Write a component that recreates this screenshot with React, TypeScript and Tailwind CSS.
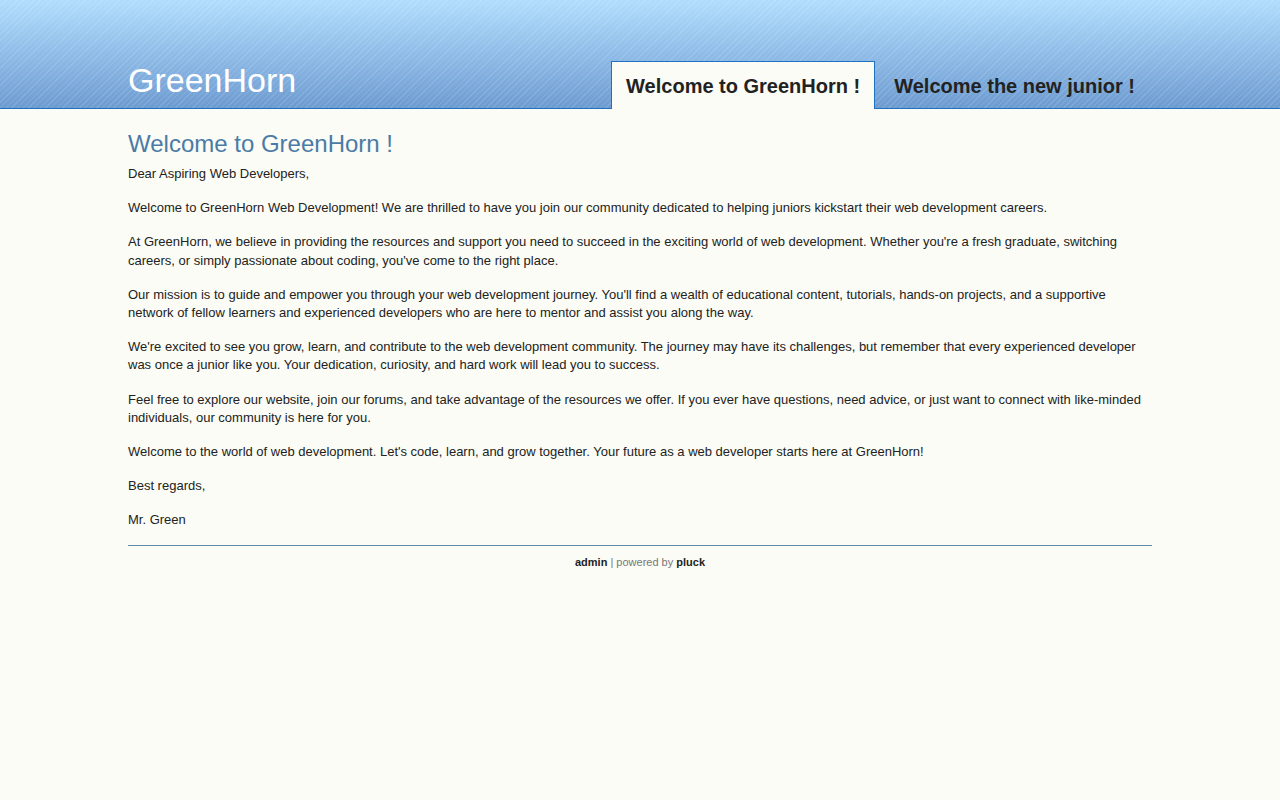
import React from 'react';

const paragraphs = [
  'Dear Aspiring Web Developers,',
  'Welcome to GreenHorn Web Development! We are thrilled to have you join our community dedicated to helping juniors kickstart their web development careers.',
  "At GreenHorn, we believe in providing the resources and support you need to succeed in the exciting world of web development. Whether you're a fresh graduate, switching careers, or simply passionate about coding, you've come to the right place.",
  "Our mission is to guide and empower you through your web development journey. You'll find a wealth of educational content, tutorials, hands-on projects, and a supportive network of fellow learners and experienced developers who are here to mentor and assist you along the way.",
  "We're excited to see you grow, learn, and contribute to the web development community. The journey may have its challenges, but remember that every experienced developer was once a junior like you. Your dedication, curiosity, and hard work will lead you to success.",
  'Feel free to explore our website, join our forums, and take advantage of the resources we offer. If you ever have questions, need advice, or just want to connect with like-minded individuals, our community is here for you.',
  "Welcome to the world of web development. Let's code, learn, and grow together. Your future as a web developer starts here at GreenHorn!",
  'Best regards,',
  'Mr. Green',
];

export default function App() {
  return (
    <div className="min-h-[800px] bg-[#fbfcf5] font-['Liberation_Sans',Arial,sans-serif] text-[#222]">
      {/* Header */}
      <div className="h-[109px] border-b border-[#1f72bf] bg-[image:repeating-linear-gradient(135deg,rgba(255,255,255,0.12)_0px,rgba(255,255,255,0.12)_1px,transparent_1px,transparent_4px),linear-gradient(to_bottom,#b1ddfd,#6d9bd1)]">
        <div className="mx-auto flex h-full w-[1024px] items-end">
          <div className="mb-[8px] text-[34px] leading-[40px] text-white">GreenHorn</div>
          <div className="ml-auto mr-[2px] flex gap-[4px] -mb-px">
            <div className="flex h-[48px] items-center border border-b-0 border-[#1f72bf] bg-[#fbfcf5] px-[14px] pt-[1px] text-[20px] font-bold text-[#222]">
              Welcome to GreenHorn !
            </div>
            <div className="flex h-[48px] items-center border border-transparent px-[14px] pt-[1px] text-[20px] font-bold text-[#222]">
              Welcome the new junior !
            </div>
          </div>
        </div>
      </div>

      {/* Content */}
      <div className="mx-auto w-[1024px] pt-[19px]">
        <h1 className="mb-[5px] text-[24px] leading-[32px] text-[#4a7ba6]">Welcome to GreenHorn !</h1>
        {paragraphs.map((p, i) => (
          <p key={i} className="mb-[16px] text-[13px] leading-[1.4]">
            {p}
          </p>
        ))}
        <div className="border-t border-[#5f8aaa] pt-[8px] text-center text-[11px] text-[#777]">
          <span className="font-bold text-[#222]">admin</span> | powered by{' '}
          <span className="font-bold text-[#222]">pluck</span>
        </div>
      </div>
    </div>
  );
}
